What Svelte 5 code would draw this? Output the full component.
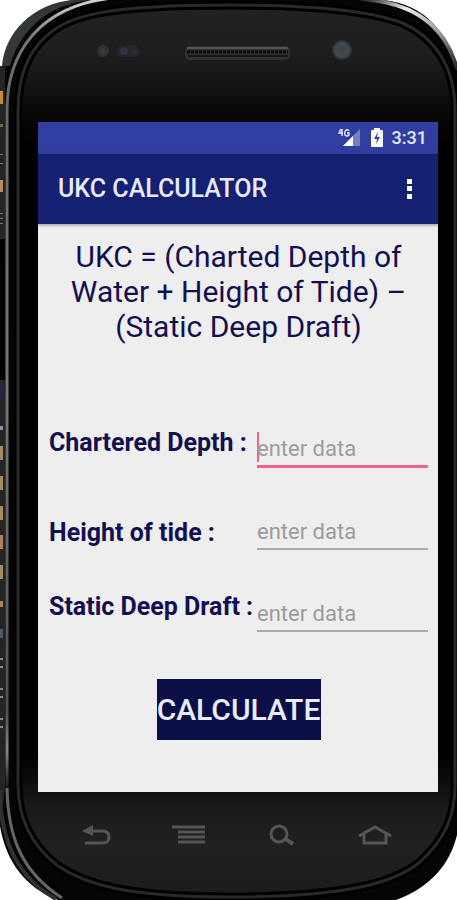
<script lang="ts">
  type Field = { id: string; label: string; low?: boolean; value: string };

  let fields: Field[] = $state([
    { id: 'depth', label: 'Chartered Depth :', value: '' },
    { id: 'tide', label: 'Height of tide :', low: true, value: '' },
    { id: 'draft', label: 'Static Deep Draft :', value: '' }
  ]);
  let active = $state('depth');
  let result: number | null = $state(null);

  const rim = 'M18 110C18 70 32 47 50 33C70 16 105 5 229 5C330 5 375 13 400 22C436 37 455 68 455 110V785C455 818 444 840 420 862C396 882 350 897 229 897C125 897 85 884 58 866C32 846 18 818 18 785Z';

  // strip of the code editor that shows behind the left edge
  const specks = [
    { y: 91, h: 13, c: '#c58b35' },
    { y: 124, h: 3, c: '#557a45' },
    { y: 154, h: 1, c: '#777777' },
    { y: 163, h: 1, c: '#777777' },
    { y: 180, h: 12, c: '#b88a62' },
    { y: 213, h: 1, c: '#777777' },
    { y: 218, h: 1, c: '#777777' },
    { y: 223, h: 1, c: '#777777' },
    { y: 382, h: 18, c: '#26243f' },
    { y: 426, h: 4, c: '#8298ab' },
    { y: 446, h: 14, c: '#a58b61' },
    { y: 476, h: 14, c: '#a58b61' },
    { y: 506, h: 14, c: '#a58b61' },
    { y: 535, h: 14, c: '#ad8262' },
    { y: 565, h: 14, c: '#a58b61' },
    { y: 601, h: 6, c: '#b28252' },
    { y: 629, h: 9, c: '#4e5870' },
    { y: 658, h: 2, c: '#888888' },
    { y: 666, h: 2, c: '#888888' },
    { y: 688, h: 2, c: '#888888' },
    { y: 696, h: 2, c: '#888888' },
    { y: 718, h: 2, c: '#888888' },
    { y: 726, h: 2, c: '#888888' }
  ];

  function calculate() {
    const [depth, tide, draft] = fields.map((f) => Number(f.value));
    result = depth + tide - draft;
  }
</script>

<div class="device">
  <svg class="shell" viewBox="0 0 457 900" preserveAspectRatio="none" aria-hidden="true">
    <defs>
      <linearGradient id="face" x1="0" y1="0" x2="0" y2="1">
        <stop offset="0" stop-color="#222222" />
        <stop offset="0.06" stop-color="#1d1d1d" />
        <stop offset="0.13" stop-color="#050505" />
        <stop offset="0.16" stop-color="#000000" />
        <stop offset="0.84" stop-color="#000000" />
        <stop offset="0.9" stop-color="#1a1a1a" />
        <stop offset="0.94" stop-color="#212121" />
        <stop offset="1" stop-color="#1c1c1c" />
      </linearGradient>
      <linearGradient id="chrome" x1="0" y1="0" x2="0" y2="1">
        <stop offset="0" stop-color="#d8d8d8" />
        <stop offset="0.05" stop-color="#777777" />
        <stop offset="0.12" stop-color="#686868" />
        <stop offset="0.5" stop-color="#777777" />
        <stop offset="0.9" stop-color="#505050" />
        <stop offset="0.95" stop-color="#888888" />
        <stop offset="1" stop-color="#111111" />
      </linearGradient>
      <linearGradient id="shine" x1="0" y1="0" x2="1" y2="1">
        <stop offset="0" stop-color="#111111" />
        <stop offset="0.3" stop-color="#eeeeee" />
        <stop offset="0.65" stop-color="#999999" />
        <stop offset="1" stop-color="#222222" />
      </linearGradient>
    </defs>
    <path d="M0 66H8V826H0Z" fill="#242424" />
    <path d="M0 239H5V380H0Z" fill="#030303" />
    {#each specks as s (s.y)}
      <rect x="0" y={s.y} width="3" height={s.h} fill={s.c} />
    {/each}
    <path d="M4 67C6 31 32 5 74 0H384C427 5 448 34 457 70V835C450 864 431 887 396 900H58C26 888 6 862 0 826L5 790V67Z" fill="#050505" />
    <path d="M2 66C5 31 34 4 72 0H90C54 4 22 24 10 66Z" fill="#333737" />
    <path d="M0 790C0 842 18 878 56 899" fill="none" stroke="#303030" stroke-width="4" />
    <path d="M7 790V110C7 52 40 6 112 -2" fill="none" stroke="url(#chrome)" stroke-width="3" />
    <path d="M7 788C8 838 22 872 62 898" fill="none" stroke="#666666" stroke-width="3" />
    <path d="M360 -1C416 2 446 28 457 69" fill="none" stroke="url(#shine)" stroke-width="4" />
    <path d={rim} fill="url(#face)" stroke="#000000" stroke-width="9" />
    <path d={rim} fill="none" stroke="#292929" stroke-width="3" />
  </svg>

  <div class="front">
    <header class="earpiece">
      <svg viewBox="0 0 400 122" aria-hidden="true">
        <circle cx="65" cy="51" r="6" fill="#303034" />
        <circle cx="65" cy="51" r="3" fill="#39393e" />
        <rect x="79" y="45" width="22" height="12" rx="5" fill="#25262c" />
        <circle cx="86" cy="51" r="4" fill="#30323f" />
        <circle cx="96" cy="51" r="3" fill="#2b2c31" />
        <rect x="147" y="46" width="105" height="14" rx="5" fill="#303030" />
        <path d="M150 48H249" stroke="#555555" stroke-width="2" stroke-linecap="round" />
        <path d="M149 52H250" stroke="#080808" stroke-width="3" stroke-dasharray="3 1" />
        <path d="M150 56H250" stroke="#171717" stroke-width="2" />
        <circle cx="304" cy="50" r="10" fill="#303438" />
        <circle cx="304" cy="50" r="8" fill="#42474d" />
        <circle cx="304" cy="49" r="3" fill="#3c4249" />
      </svg>
    </header>

    <main class="screen">
      <div class="status">
        <svg class="signal" viewBox="0 0 24 22" aria-hidden="true">
          <path d="M22 2V19H5Z" fill="#7580bd" />
          <path d="M15 9V19H5Z" fill="#ffffff" />
          <path d="M3 2L1 6H5M4 2V9M11 4Q10 2 8 3Q6 5 7 8Q9 10 11 8V6H9" fill="none" stroke="#e7e9f7" stroke-width="1.4" />
        </svg>
        <svg class="battery" viewBox="0 0 14 20" aria-hidden="true">
          <path d="M4 0H10V2H12Q13 2 13 3V18Q13 19 12 19H2Q1 19 1 18V3Q1 2 2 2H4Z" fill="#ffffff" />
          <path d="M8 4L4 11H7L6 16L10 9H7Z" fill="#303f9f" />
        </svg>
        <time>3:31</time>
      </div>
      <div class="appbar">
        <h1>UKC CALCULATOR</h1>
        <button class="more" type="button" aria-label="More options">
          <svg viewBox="0 0 6 22" aria-hidden="true">
            <path d="M0 1H5V6H0ZM0 8H5V13H0ZM0 16H5V21H0Z" fill="#ffffff" />
          </svg>
        </button>
      </div>

      <form class="content" onsubmit={(e) => { e.preventDefault(); calculate(); }}>
        <p class="formula">UKC = (Charted Depth of Water + Height of Tide) – (Static Deep Draft)</p>
        <div class="fields">
          {#each fields as f (f.id)}
            <div class="row">
              <label for={f.id} class:low={f.low}>{f.label}</label>
              <input
                id={f.id}
                class:active={active === f.id}
                class:empty={!f.value}
                type="text"
                inputmode="decimal"
                placeholder="enter data"
                bind:value={f.value}
                onfocus={() => (active = f.id)}
              />
            </div>
          {/each}
        </div>
        <button class="calculate" type="submit">CALCULATE</button>
        {#if result !== null}
          <output>{result}</output>
        {/if}
      </form>
    </main>

    <nav class="keys">
      <button type="button" aria-label="Back">
        <svg viewBox="0 0 36 24" aria-hidden="true">
          <path d="M11 7H24Q31 7 31 13T24 19H7" fill="none" stroke="#555555" stroke-width="3" />
          <path d="M4 7L15 1V12Z" fill="#555555" />
        </svg>
      </button>
      <button type="button" aria-label="Menu">
        <svg viewBox="0 0 36 24" aria-hidden="true">
          <path d="M1 3H34M7 8H34M7 13H34M7 18H34" stroke="#555555" stroke-width="3" />
        </svg>
      </button>
      <button type="button" aria-label="Search">
        <svg viewBox="0 0 36 24" aria-hidden="true">
          <circle cx="14" cy="10" r="8" fill="none" stroke="#555555" stroke-width="3" />
          <path d="M19 14L28 20" stroke="#555555" stroke-width="4" />
        </svg>
      </button>
      <button type="button" aria-label="Home">
        <svg viewBox="0 0 36 24" aria-hidden="true">
          <path d="M1 12L17 3L33 12M6 10V19H28V10" fill="none" stroke="#555555" stroke-width="3" />
        </svg>
      </button>
    </nav>
  </div>
</div>

<style>
  :global(body) { margin: 0; background: #fff; }
  .device { display: grid; font-family: Roboto, sans-serif; overflow: hidden; }
  .shell, .front { grid-area: 1 / 1; }
  .shell { width: 100%; height: 100%; display: block; }
  .front { display: flex; flex-direction: column; padding: 0 19px 0 38px; z-index: 1; }
  button { border: none; border-radius: 0; background: transparent; padding: 0; font-family: inherit; cursor: pointer; }
  svg { display: block; }

  .earpiece { height: 122px; }
  .earpiece svg { width: 100%; height: 122px; }

  .screen { background: #eee; color: #12104f; }
  .status { display: flex; align-items: center; justify-content: flex-end; height: 32px; padding: 0 11px; background: #303f9f; color: #e4e7f6; }
  .status time { font-size: 18px; font-weight: 500; line-height: 32px; }
  .signal { width: 24px; height: 22px; margin-right: 8px; }
  .battery { width: 14px; height: 20px; margin-right: 8px; }

  .appbar { display: flex; align-items: center; justify-content: space-between; height: 70px; padding: 0 16px 0 20px; background: #142072; box-shadow: 0 1px 3px rgba(0, 0, 0, 0.4); color: #e8e9f6; }
  h1 { margin: 0; font-size: 25px; font-weight: 500; line-height: 32px; }
  .more { width: 24px; height: 40px; display: grid; place-items: center; }
  .more svg { width: 6px; height: 22px; }

  .content { display: flex; flex-direction: column; padding: 15px 10px 52px 11px; }
  .formula { margin: 0; padding: 0 16px; font-size: 30px; line-height: 35px; text-align: center; }
  .fields { display: flex; flex-direction: column; gap: 40px; margin-top: 82px; }
  .row { display: flex; justify-content: space-between; height: 42px; }
  label { font-size: 25px; font-weight: 700; line-height: 34px; white-space: nowrap; }
  label.low { align-self: flex-end; }
  input { width: 171px; height: 42px; box-sizing: border-box; border: none; border-bottom: 2px solid #aaa; border-radius: 0; padding: 6px 0 0; background: transparent; color: #12104f; font-family: inherit; font-size: 22px; outline: none; }
  input::placeholder { color: #9c9c9c; opacity: 1; }
  input.active { border-bottom: 3px solid #f06292; caret-color: #f06292; }
  input.active.empty { background: linear-gradient(#f06292, #f06292) no-repeat 0 6px / 2px 30px; }
  .calculate { align-self: center; width: 164px; height: 61px; margin-top: 47px; background: #0b0e47; color: #e8ebf8; font-size: 30px; font-weight: 500; white-space: nowrap; }
  output { margin-top: 12px; font-size: 24px; text-align: center; }

  .keys { display: flex; justify-content: space-between; padding: 32px 44px 52px 40px; }
  .keys button, .keys svg { width: 36px; height: 24px; }
</style>
